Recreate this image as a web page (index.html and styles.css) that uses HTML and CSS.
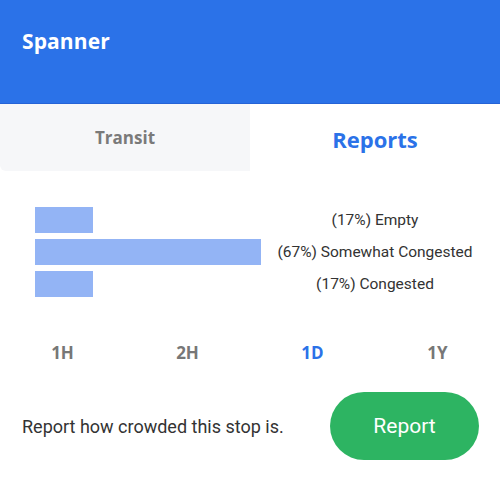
FILE: index.html
```html
<!DOCTYPE html>
<html>
<head>
<meta charset="utf-8">
<link rel="stylesheet" href="styles.css">
</head>
<body>
<header class="appbar"><h1 class="title">Spanner</h1></header>
<nav class="tabs">
  <div class="tab tab-inactive">Transit</div>
  <div class="tab tab-active">Reports</div>
</nav>
<section class="chart">
  <div class="row"><div class="track"><div class="bar" style="width:58px"></div></div><div class="label">(17%) Empty</div></div>
  <div class="row"><div class="track"><div class="bar" style="width:226px"></div></div><div class="label">(67%) Somewhat Congested</div></div>
  <div class="row"><div class="track"><div class="bar" style="width:58px"></div></div><div class="label">(17%) Congested</div></div>
</section>
<div class="ranges">
  <span class="range">1H</span>
  <span class="range">2H</span>
  <span class="range range-active">1D</span>
  <span class="range">1Y</span>
</div>
<footer class="report">
  <p class="report-text">Report how crowded this stop is.</p>
  <button class="report-btn">Report</button>
</footer>
</body>
</html>
```
FILE: styles.css
```css
* { box-sizing: border-box; }
html, body { margin: 0; padding: 0; background: #fff; }
body { width: 500px; height: 480px; overflow: hidden; font-family: Roboto, "Open Sans", sans-serif; color: #333; }
.appbar { height: 104px; background: #2b72e8; border-bottom: 1px solid #2563d6; padding: 27px 22px 0; }
.title { margin: 0; font-family: "Open Sans", Roboto, sans-serif; font-weight: 700; font-size: 21px; color: #fff; letter-spacing: 0.1px; }
.tabs { display: flex; height: 67px; }
.tab { flex: 1; display: flex; align-items: center; justify-content: center; font-family: "Open Sans", Roboto, sans-serif; font-weight: 700; }
.tab-inactive { background: #f6f7f9; border-bottom-left-radius: 6px; color: #7a7a7a; font-size: 17px; }
.tab-active { background: #fff; color: #2b72e8; font-size: 22px; padding-top: 2px; }
.chart { display: flex; flex-direction: column; gap: 6px; padding: 36px 0 0 35px; }
.row { display: flex; align-items: center; height: 26px; }
.track { width: 240px; height: 26px; }
.bar { height: 26px; background: #93b4f5; }
.label { width: 200px; text-align: center; font-size: 15.5px; color: #333; }
.ranges { display: grid; grid-template-columns: repeat(4, 1fr); margin-top: 44px; }
.range { text-align: center; font-family: "Open Sans", Roboto, sans-serif; font-weight: 700; font-size: 17px; color: #777; }
.range-active { color: #2b72e8; }
.report { display: flex; align-items: center; justify-content: space-between; padding: 0 21px 0 22px; margin-top: 28px; }
.report-text { margin: 0; font-size: 18px; color: #333; }
.report-btn { width: 149px; height: 68px; border: none; border-radius: 34px; background: #2db462; color: #fff; font-family: Roboto, sans-serif; font-size: 21px; }
```
